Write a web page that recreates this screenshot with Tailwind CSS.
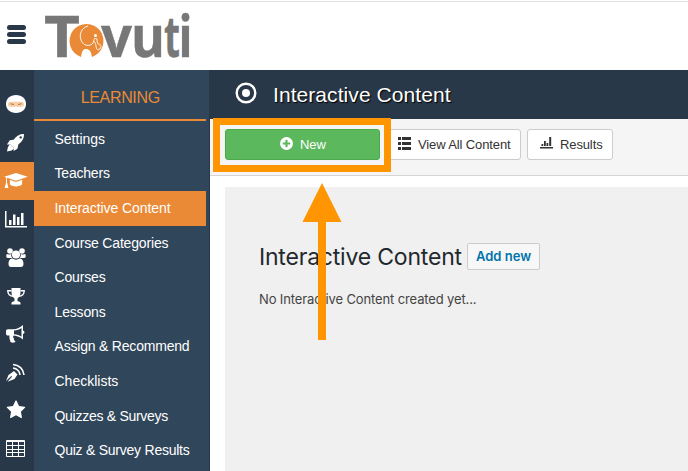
<!DOCTYPE html>
<html lang="en">
<head>
    <meta charset="UTF-8">
    <meta name="viewport" content="width=device-width, initial-scale=1.0">
    <title>Tovuti - Interactive Content</title>
    <script src="https://cdn.jsdelivr.net/npm/@tailwindcss/browser@4"></script>
</head>
<body class="relative w-[688px] h-[471px] overflow-hidden bg-white font-['Liberation_Sans',Arial,sans-serif] flex flex-col">
    <!-- Top bar -->
    <header class="h-[70px] shrink-0 flex items-start border-t border-[#e0e0e0] mt-px">
        <button class="flex flex-col gap-[2px] ml-[7px] mt-[23px]" aria-label="Menu">
            <span class="w-[19px] h-[5px] rounded-full bg-[#283848]"></span>
            <span class="w-[19px] h-[5px] rounded-full bg-[#283848]"></span>
            <span class="w-[19px] h-[5px] rounded-full bg-[#283848]"></span>
        </button>
        <svg class="ml-[17px] w-[152px] h-[64px] overflow-visible" viewBox="43 2 152 64" aria-label="Tovuti">
            <g fill="#777" stroke="#777" stroke-width=".4" font-family="'Open Sans', sans-serif" font-weight="700" font-size="57">
                <text x="44" y="56.500" textLength="36" lengthAdjust="spacingAndGlyphs">T</text>
                <text x="101" y="56.500" textLength="31" lengthAdjust="spacingAndGlyphs">v</text>
                <text x="131" y="56.500" textLength="34" lengthAdjust="spacingAndGlyphs">u</text>
                <text x="164" y="56.500" textLength="16" lengthAdjust="spacingAndGlyphs">t</text>
                <text x="178.500" y="56.500" textLength="14" lengthAdjust="spacingAndGlyphs">i</text>
            </g>
            <circle cx="86" cy="41" r="17.300" fill="#fff"/>
            <path d="M81 57A17 17 0 1 1 92 57C91 51 89 49 86 49S82 51 81 57Z" fill="#ea8a36"/>
            <g fill="none" stroke="#fff" stroke-width=".9">
                <path d="M88 26C81 28 79 35 81 40C83 46 90 47 93 43C95 40 93 37 97 39"/>
                <path d="M93 41C97 43 95 46 97 49C98 51 101 49 101 46M97 39C97 44 99 45 101 45"/>
            </g>
            <circle cx="95.500" cy="35.500" r="1.500" fill="#fff"/>
        </svg>
    </header>

    <div class="flex flex-1 min-h-0 -mt-px">
        <!-- Icon rail -->
        <nav class="w-[33.5px] shrink-0 bg-[#283848] pt-[15px] text-white flex flex-col">
            <a class="h-[38.4px] shrink-0 flex items-center justify-center pr-0.5">
                <svg class="w-[22px] h-[20px]" viewBox="0 0 22 20">
                    <path d="M11 1C17 1 21 4.500 21 10S17 19 11 19S1 15.500 1 10S5 1 11 1Z" fill="currentColor"/>
                    <rect x="3" y="7.800" width="16" height="5" rx="2.500" fill="#f7cfa3"/>
                    <path d="M5.500 9.800L9 10.500M16.500 9.800L13 10.500" stroke="#a57c55" stroke-width="1"/>
                </svg>
            </a>
            <a class="h-[38.4px] shrink-0 flex items-center justify-center pr-0.5">
                <svg class="w-[19px] h-[19px]" viewBox="0 0 20 20" fill="currentColor">
                    <path fill-rule="evenodd" d="M19 1C14 1 11 3 8 7L4 7.500L1 12L4.500 12L8 15.500V19L12 16.500L13 12C17 9 19 6 19 1ZM15.500 3.300A1.300 1.300 0 1 1 15.400 3.300Z"/>
                    <path d="M4 11.500L8.500 16L6 18.500L1 19.500L2 15Z"/>
                </svg>
            </a>
            <a class="h-[38.4px] shrink-0 flex items-center justify-center pr-0.5 bg-[#ea8a36]">
                <svg class="w-[24px] h-[17px]" viewBox="0 0 25 18" fill="currentColor">
                    <path d="M12.500 1L25 5L12.500 9.300L3 6.200V11L4.500 17H.5L2 11V5.800L0 5Z"/>
                    <path d="M6 8.200L12.500 10.500L19 8.200V13C17 16 8 16 6 13Z"/>
                </svg>
            </a>
            <a class="h-[38.4px] shrink-0 flex items-center justify-center pr-0.5">
                <svg class="w-[22px] h-[17px]" viewBox="0 0 22 17" fill="currentColor">
                    <path d="M0 0H1.500V15H22V16.500H0ZM4 9H6.500V14H4ZM8 3.500H10.500V14H8ZM12 6H14.500V14H12ZM16 2H18.500V14H16Z"/>
                </svg>
            </a>
            <a class="h-[38.4px] shrink-0 flex items-center justify-center pr-0.5">
                <svg class="w-[20px] h-[19px]" viewBox="0 0 20 19" fill="currentColor">
                    <circle cx="4" cy="3" r="2.800"/>
                    <circle cx="16" cy="3" r="2.800"/>
                    <circle cx="10" cy="6.500" r="4.100"/>
                    <path d="M1.500 6C3 6.800 4.500 6.500 5.300 6C5 8 5.600 9 6.200 10H2C0 10 0 8 .5 6.500ZM18.500 6C17 6.800 15.500 6.500 14.700 6C15 8 14.400 9 13.800 10H18C20 10 20 8 19.500 6.500Z"/>
                    <path d="M6.500 10.500C9 12 11 12 13.500 10.500C16.500 10.500 17.500 13 17.500 16C17.500 18 16.500 19 15 19H5C3.500 19 2.500 18 2.500 16C2.500 13 3.500 10.500 6.500 10.500Z"/>
                </svg>
            </a>
            <a class="h-[38.4px] shrink-0 flex items-center justify-center pr-0.5">
                <svg class="w-[18px] h-[17px]" viewBox="0 0 18 17">
                    <path d="M4.500 0H13.500V4C13.500 8 12 9 10.500 10.500V13C12 13.500 13.500 14 13.500 15V16.500H4.500V15C4.500 14 6 13.500 7.500 13V10.500C6 9 4.500 8 4.500 4Z" fill="currentColor"/>
                    <path d="M4.500 2.800H.8C.8 6 3 8.200 6.500 8.200M13.500 2.800H17.200C17.200 6 15 8.200 11.500 8.200" fill="none" stroke="currentColor" stroke-width="1.400"/>
                </svg>
            </a>
            <a class="h-[38.4px] shrink-0 flex items-center justify-center pr-0.5 pb-0.5">
                <svg class="w-[19px] h-[18px]" viewBox="0 0 19 18" fill="currentColor">
                    <path fill-rule="evenodd" d="M17 0V5.500C19 6 19 8.500 17 9V14.500C14 12 11 10.800 8 10.500C6.500 11.500 7 12.500 8 13.500C7.500 15 8.500 15.500 9.500 16.500C8.500 18 6 18 4.500 17C4 15 3 13 3.500 10.500H2C.8 10.500 0 9.800 0 9V6C0 5 .8 4.200 2 4.200H7C11 4.200 14 2.500 17 0ZM15.500 3C13.500 4.300 11 5.300 8 5.600V9.200C11 9.500 13.500 10.300 15.500 11.700Z"/>
                </svg>
            </a>
            <a class="h-[38.4px] shrink-0 flex items-center justify-center pr-0.5">
                <svg class="w-[19px] h-[19px]" viewBox="0 0 19 19">
                    <path d="M0 18L2.500 12L8 8L11.500 11.500L8.500 16L1.500 18.700L6 13.800L5.300 13Z" fill="currentColor"/>
                    <path d="M7 5C10.500 5.500 13.500 8 14 12M7 1.500C13 2 17.500 6 18 12" fill="none" stroke="currentColor" stroke-width="1.600"/>
                </svg>
            </a>
            <a class="h-[38.4px] shrink-0 flex items-center justify-center pr-0.5 pb-0.5">
                <svg class="w-[20px] h-[20px]" viewBox="0 0 1792 1792" fill="currentColor">
                    <path d="M1728 647q0 22-26 48l-363 354 86 500q1 7 1 20 0 21-10.500 35.500t-30.500 14.500q-19 0-40-12l-449-236-449 236q-22 12-40 12-21 0-31.500-14.500t-10.500-35.500q0-6 2-20l86-500-364-354q-25-27-25-48 0-37 56-46l502-73 225-455q19-41 49-41t49 41l225 455 502 73q56 9 56 46z"/>
                </svg>
            </a>
            <a class="h-[38.4px] shrink-0 flex items-center justify-center pr-0.5 pb-0.5">
                <svg class="w-[19px] h-[17px]" viewBox="0 0 19 17" fill="none" stroke="currentColor">
                    <path d="M.5 .5H18.500V16.500H.5ZM.5 1.500H18.500M.5 5.500H18.500M.5 9.500H18.500M.5 12.500H18.500M6.500 2V16M12.500 2V16"/>
                </svg>
            </a>
        </nav>

        <!-- Section menu -->
        <aside class="w-[176.5px] shrink-0 bg-[#30465a] border-r border-[#283848] pr-[3px] text-white text-[14px]">
            <h2 class="h-[49px] pt-[7px] pl-px flex items-center justify-center text-[#ea8a36] text-[16px] tracking-[-0.35px]">LEARNING</h2>
            <div class="h-[1.5px] bg-[#ea8a36]"></div>
            <ul class="pt-[1.5px]">
                <li class="h-[34.6px] pl-[21px] flex items-center">Settings</li>
                <li class="h-[34.6px] pl-[21px] flex items-center tracking-[-0.2px]">Teachers</li>
                <li class="h-[34.6px] pl-[21px] flex items-center tracking-[-0.08px] bg-[#ea8a36]">Interactive Content</li>
                <li class="h-[34.6px] pl-[21px] flex items-center tracking-[-0.17px]">Course Categories</li>
                <li class="h-[34.6px] pl-[21px] flex items-center tracking-[-0.15px]">Courses</li>
                <li class="h-[34.6px] pl-[21px] flex items-center tracking-[-0.15px]">Lessons</li>
                <li class="h-[34.6px] pl-[21px] flex items-center tracking-[-0.2px]">Assign &amp; Recommend</li>
                <li class="h-[34.6px] pl-[21px] flex items-center">Checklists</li>
                <li class="h-[34.6px] pl-[21px] flex items-center tracking-[-0.28px]">Quizzes &amp; Surveys</li>
                <li class="h-[34.6px] pl-[21px] flex items-center tracking-[-0.24px]">Quiz &amp; Survey Results</li>
            </ul>
        </aside>

        <main class="flex-1 min-w-0 flex flex-col">
            <div class="h-[49px] shrink-0 bg-[#283848] flex items-center pl-[25px] gap-[16px] text-white">
                <svg class="w-[22px] h-[22px] -mt-[3px]" viewBox="0 0 22 22">
                    <circle cx="11" cy="11" r="9.300" fill="none" stroke="currentColor" stroke-width="2.400"/>
                    <circle cx="11" cy="11" r="4" fill="currentColor"/>
                </svg>
                <h1 class="text-[21px] leading-none text-shadow-[1px_1px_1px_#000] tracking-[0.07px]">Interactive Content</h1>
            </div>

            <div class="h-[57px] shrink-0 bg-[#f5f5f5] border-b border-[#d4d4d4] flex items-start pt-[10px] pl-[15px] text-[13px] text-[#333]">
                <button class="w-[155px] h-[31px] rounded-[3px] bg-[#5cb85c] border border-[#4ba94b] text-white flex items-center justify-center gap-[6px]">
                    <svg class="w-[15px] h-[15px] -mt-0.5" viewBox="0 0 1792 1792" fill="currentColor">
                        <path d="M1344 960v-128q0-26-19-45t-45-19h-256v-256q0-26-19-45t-45-19h-128q-26 0-45 19t-19 45v256h-256q-26 0-45 19t-19 45v128q0 26 19 45t45 19h256v256q0 26 19 45t45 19h128q26 0 45-19t19-45v-256h256q26 0 45-19t19-45zm320-64q0 209-103 385.500t-279.500 279.500-385.500 103-385.500-103-279.500-279.500-103-385.500 103-385.500 279.500-279.500 385.500-103 385.500 103 279.500 279.500 103 385.500z"/>
                    </svg>
                    New
                </button>
                <button class="w-[136px] ml-[5px] h-[31px] rounded-[3px] bg-white border border-[#ccc] flex items-center pl-[12px] gap-[7px] whitespace-nowrap tracking-[-0.12px]">
                    <svg class="w-[13px] h-[13px] -mt-[3px]" viewBox="0 0 13 13" fill="currentColor">
                        <path d="M0 0H3V3H0ZM4 0H13V3H4ZM0 5H3V8H0ZM4 5H13V8H4ZM0 10H3V13H0ZM4 10H13V13H4Z"/>
                    </svg>
                    View All Content
                </button>
                <button class="w-[86px] ml-[6px] h-[31px] rounded-[3px] bg-white border border-[#ccc] flex items-center pl-[12px] gap-[7px] tracking-[-0.12px]">
                    <svg class="w-[13px] h-[12px] -mt-[3px]" viewBox="0 0 13 12" fill="currentColor">
                        <path d="M0 10H13V11.500H0ZM1.500 7H3.300V9H1.500ZM4 4H5.800V9H4ZM6.500 6H8.300V9H6.500ZM9.200 0H11.200V9H9.200Z"/>
                    </svg>
                    Results
                </button>
            </div>

            <section class="flex-1 mt-[11px] ml-[15px] bg-[#f0f0f0] pl-[34px] pt-[55px] font-['Inter',sans-serif]">
                <div class="flex items-start gap-[5px]">
                    <h2 class="w-[203px] text-[23px] leading-[27px] pt-[2px] tracking-[-0.2px] text-[#23282d] whitespace-nowrap">Interactive Content</h2>
                    <button class="w-[73px] h-[27px] mt-px rounded-[2px] border border-[#ccc] bg-[#f7f7f7] text-[#0073aa] text-[13px] font-semibold whitespace-nowrap">Add new</button>
                </div>
                <p class="mt-[19px] text-[13px] leading-[18px] tracking-[-0.13px] text-[#444]">No Interactive Content created yet...</p>
            </section>
        </main>
    </div>

    <!-- Highlight around the New button -->
    <div class="absolute left-[213px] top-[118px] w-[178px] h-[54px] border-[7px] border-[#ff9500]"></div>
    <svg class="absolute left-[302px] top-[183px] w-[40px] h-[157px]" viewBox="0 0 40 157" fill="#ff9500">
        <path d="M20 0L39.500 39H24V157H16V39H.5Z"/>
    </svg>
</body>
</html>
